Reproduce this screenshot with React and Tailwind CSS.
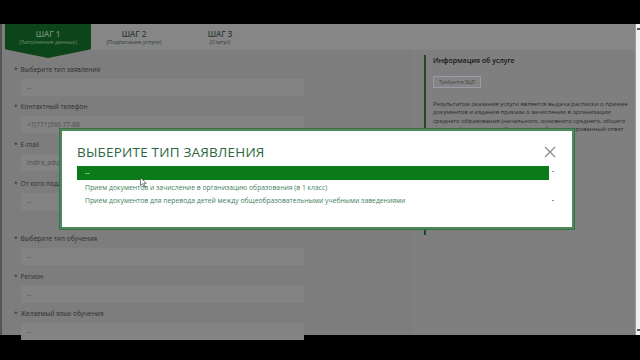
import React from 'react';

const fields = [
  { label: 'Выберите тип заявления', value: '--', mt: 'mt-0' },
  { label: 'Контактный телефон', value: '+7(771)593-77-88', mt: 'mt-[6px]' },
  { label: 'E-mail', value: 'indira_adua@mail.ru', mt: 'mt-[7px]' },
  { label: 'От кого подается заявление', value: '--', mt: 'mt-[8px]' },
  { label: 'Выберите тип обучения', value: '--', mt: 'mt-[24px]' },
  { label: 'Регион', value: '--', mt: 'mt-[7px]' },
  { label: 'Желаемый язык обучения', value: '--', mt: 'mt-[6px]' },
];

const Field = ({ label, value, mt }) => (
  <div className={`${mt} flex flex-col`}>
    <p className="pl-[9px] text-[6.5px] leading-[10px] text-[#2e2e2e]">
      <span className="mr-[3px]">*</span>
      {label}
    </p>
    <div className="mt-[4px] ml-[16px] w-[283px] h-[17px] bg-[#838383] flex items-center px-[6px] text-[6.5px] text-[#4e4e4e]">
      {value}
    </div>
  </div>
);

const Tab = ({ title, sub, active }) => (
  <div
    className={`w-[86px] flex flex-col items-center pt-[5px] ${
      active ? 'h-[34px] bg-[#0c4519] text-[#6f8f74] [clip-path:polygon(0_0,100%_0,100%_74%,50%_100%,0_74%)]' : 'h-[26px] text-[#2f3f33]'
    }`}
  >
    <span className="text-[8px] leading-[10px] font-semibold">{title}</span>
    <span className="text-[5.5px] leading-[7px]">{sub}</span>
  </div>
);

export default function App() {
  return (
    <div className="w-[640px] h-[360px] bg-black flex flex-col font-['Open_Sans',sans-serif] overflow-hidden">
      <div className="h-[24px] shrink-0" />
      <div className="relative h-[311px] flex bg-[#7f7f7f] border-l-2 border-[#555]">
        <div className="flex-1 flex">
          {/* form column */}
          <div className="w-[411px] pl-[3px] flex flex-col bg-[#7d7d7d]">
            <div className="h-[26px] bg-[#868686] flex -mr-[222px] relative z-0">
              <Tab title="ШАГ 1" sub="(Заполнение данных)" active />
              <Tab title="ШАГ 2" sub="(Подписание услуги)" />
              <Tab title="ШАГ 3" sub="(Статус)" />
            </div>
            <div className="mt-[15px] flex flex-col">
              {fields.map((f) => (
                <Field key={f.label} {...f} />
              ))}
            </div>
          </div>
          {/* info column */}
          <div className="flex-1 pt-[31px] pl-[11px] pr-[6px]">
            <div className="border-l-2 border-[#1d4a2a] pl-[7px] pt-[1px] h-[180px]">
              <p className="text-[7px] leading-[10px] font-semibold text-[#151515]">Информация об услуге</p>
              <div className="mt-[4px] inline-block border border-[#9a9aa8] bg-[#858585] px-[5px] py-[2px] text-[5px] leading-[6px] text-[#444]">
                Требуется ЭЦП
              </div>
              <p className="mt-[10px] text-[6px] leading-[8.3px] text-[#2a2a2a]">
                Результатом оказания услуги является выдача расписки о приеме документов и издания приказа о зачислении в организации среднего образования (начального, основного среднего, общего среднего) на начало учебного года либо мотивированный ответ об отказе в оказании государственной услуги.
              </p>
            </div>
          </div>
        </div>
        {/* browser scrollbar */}
        <div className="w-[5px] bg-[#f0f0f0] border-l border-[#999] flex flex-col justify-between items-center py-[4px]">
          <span className="w-[3px] h-[2px] bg-[#555]" />
          <span className="w-[3px] h-[2px] bg-[#555]" />
        </div>

        {/* modal */}
        <div className="absolute left-[58px] top-[105px] w-[514px] h-[100px] bg-white border-2 border-[#4d8a5b] shadow-[0_0_0_1px_#3e6e48] px-[15px]">
          <div className="flex items-center justify-between pt-[11px]">
            <h2 className="text-[13.5px] leading-[20px] text-[#2a663f] tracking-[0.2px]">ВЫБЕРИТЕ ТИП ЗАЯВЛЕНИЯ</h2>
            <svg width="12" height="12" viewBox="0 0 12 12" className="mr-[1px]">
              <path d="M1 1 L11 11 M11 1 L1 11" stroke="#8a8a8a" strokeWidth="1.3" />
            </svg>
          </div>
          <div className="mt-[4px] flex">
            <div className="flex-1 flex flex-col">
              <div className="h-[14px] bg-[#0b7a19] flex items-center px-[8px] text-[7px] text-white">--</div>
              <p className="mt-[2px] px-[8px] text-[6.8px] leading-[12px] text-[#3f7f62]">
                Прием документов и зачисление в организацию образования (в 1 класс)
              </p>
              <p className="mt-[1px] px-[8px] text-[6.8px] leading-[12px] text-[#3f7f62]">
                Прием документов для перевода детей между общеобразовательными учебными заведениями
              </p>
            </div>
            <div className="w-[8px] flex flex-col justify-between items-center py-[5px] h-[40px]">
              <span className="w-[2px] h-[1px] bg-[#999]" />
              <span className="w-[2px] h-[1px] bg-[#999]" />
            </div>
          </div>
          {/* cursor */}
          <svg width="7" height="11" viewBox="0 0 7 11" className="absolute left-[78px] top-[46px]">
            <path d="M0.5 0.5 L0.5 8.5 L2.5 6.8 L4 10 L5.2 9.4 L3.8 6.3 L6.3 6.3 Z" fill="#fff" stroke="#222" strokeWidth="0.6" />
          </svg>
        </div>
      </div>
      <div className="flex-1" />
    </div>
  );
}
